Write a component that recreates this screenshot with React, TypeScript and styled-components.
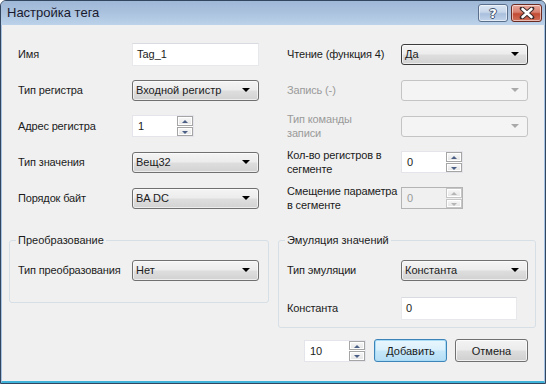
import React from 'react';
import styled, { createGlobalStyle, css } from 'styled-components';

const GlobalStyle = createGlobalStyle`
  html, body {
    margin: 0;
    padding: 0;
    background: #ffffff;
  }
  body {
    font-family: "Liberation Sans", Arial, sans-serif;
    font-size: 11px;
    color: #1b1b1b;
  }
  * {
    box-sizing: border-box;
  }
`;

const Window = styled.div`
  width: 546px;
  height: 384px;
  display: flex;
  flex-direction: column;
  border: 1px solid #33465f;
  border-radius: 6px 6px 0 0;
  overflow: hidden;
  background: #b4cbe5;
`;

const TitleBar = styled.div`
  height: 24px;
  flex: none;
  display: flex;
  align-items: flex-start;
  padding: 0 3px 0 6px;
  background: linear-gradient(#9fb8d6 0%, #a9c1dd 45%, #bcd2ea 100%);
`;

const TitleText = styled.div`
  flex: 1;
  font-size: 13px;
  line-height: 24px;
  color: #1a1a2e;
`;

const CaptionButton = styled.div<{ $close?: boolean }>`
  height: 18px;
  margin-top: 3px;
  display: flex;
  align-items: center;
  justify-content: center;
  border: 1px solid #5a6f8c;
  border-radius: 3px;
  box-shadow: inset 0 0 0 1px rgba(255, 255, 255, 0.55);
  ${(p) =>
    p.$close
      ? css`
          width: 31px;
          margin-left: 3px;
          border-color: #6b2a22;
          background: linear-gradient(#e9a89b 0%, #d7806f 45%, #c34a33 55%, #d0705a 100%);
        `
      : css`
          width: 30px;
          background: linear-gradient(#dbe6f3 0%, #c6d6ea 45%, #a9bfdc 55%, #c2d5ec 100%);
        `}
`;

const HelpMark = styled.span`
  font-family: "DejaVu Sans", sans-serif;
  font-weight: bold;
  font-size: 13px;
  line-height: 13px;
  color: #ffffff;
  text-shadow: -1px 0 #40526d, 1px 0 #40526d, 0 -1px #40526d, 0 1px #40526d;
`;

const Body = styled.div`
  flex: 1;
  display: flex;
  flex-direction: column;
  background: #f0f0f0;
  border-left: 1px solid #a6c3e3;
  border-right: 1px solid #a6c3e3;
  border-bottom: 2px solid #3fb3d9;
  padding: 11px 8px 0 7px;
`;

const FieldGrid = styled.div`
  margin-left: 9px;
  display: grid;
  grid-template-columns: 114px 127px 28px 114px 127px;
  grid-auto-rows: 36px;
  align-items: center;
`;

const Label = styled.div<{ $disabled?: boolean; $col?: number }>`
  grid-column: ${(p) => p.$col ?? 1};
  white-space: nowrap;
  line-height: 14px;
  letter-spacing: -0.15px;
  color: ${(p) => (p.$disabled ? '#9a9a9a' : '#1b1b1b')};
`;

const Cell = styled.div<{ $col: number }>`
  grid-column: ${(p) => p.$col};
  display: flex;
  align-items: center;
`;

const TextInput = styled.div<{ $width?: number }>`
  width: ${(p) => p.$width ?? 127}px;
  height: 23px;
  padding: 0 4px;
  display: flex;
  align-items: center;
  background: #ffffff;
  border: 1px solid #e6e8ec;
  border-top-color: #d8dbe0;
`;

const ComboBox = styled.div<{ $disabled?: boolean; $focused?: boolean }>`
  position: relative;
  width: 127px;
  height: 21px;
  padding: 0 20px 0 3px;
  display: flex;
  align-items: center;
  border: 1px solid ${(p) => (p.$disabled ? '#c4c4c4' : p.$focused ? '#3c3c3c' : '#707070')};
  border-radius: 3px;
  background: ${(p) =>
    p.$disabled
      ? '#f4f4f4'
      : 'linear-gradient(#f4f4f4 0%, #ececec 48%, #dedede 52%, #d2d2d2 100%)'};
  box-shadow: ${(p) => (p.$disabled ? 'none' : 'inset 0 0 0 1px rgba(255,255,255,0.6)')};

  &::after {
    content: '';
    position: absolute;
    right: 8px;
    top: 7px;
    border-left: 4px solid transparent;
    border-right: 4px solid transparent;
    border-top: 4px solid ${(p) => (p.$disabled ? '#a9a9a9' : '#000000')};
  }
`;

const Spin = styled.div<{ $disabled?: boolean }>`
  width: 62px;
  height: 22px;
  display: flex;
  border: 1px solid ${(p) => (p.$disabled ? '#b4b4b4' : '#e3e5ea')};
  background: ${(p) => (p.$disabled ? '#f0f0f0' : '#ffffff')};
`;

const SpinText = styled.div<{ $disabled?: boolean }>`
  flex: 1;
  padding: 0 5px;
  display: flex;
  align-items: center;
  color: ${(p) => (p.$disabled ? '#9a9a9a' : '#1b1b1b')};
`;

const SpinButtons = styled.div`
  width: 16px;
  display: flex;
  flex-direction: column;
  gap: 1px;
`;

const SpinHalf = styled.div<{ $down?: boolean; $disabled?: boolean }>`
  flex: 1;
  position: relative;
  border: 1px solid ${(p) => (p.$disabled ? '#c6c6c6' : '#a5a5a5')};
  background: linear-gradient(#f8f8f8, #e4e4e4);
  box-shadow: inset 0 0 0 1px #ffffff;

  &::after {
    content: '';
    position: absolute;
    left: 4px;
    top: 3px;
    border-left: 3px solid transparent;
    border-right: 3px solid transparent;
    ${(p) =>
      p.$down
        ? css`border-top: 3px solid ${p.$disabled ? '#b5b5b5' : '#4b5f86'};`
        : css`border-bottom: 3px solid ${p.$disabled ? '#b5b5b5' : '#4b5f86'};`}
  }
`;

const GroupRow = styled.div`
  margin-top: 17px;
  display: flex;
  align-items: flex-start;
  gap: 9px;
`;

const Group = styled.fieldset<{ $width: number; $bottom?: number }>`
  width: ${(p) => p.$width}px;
  margin: 0;
  padding: 5px 7px ${(p) => p.$bottom ?? 1}px 8px;
  border: 1px solid #d5dfe5;
  border-radius: 3px;
  min-width: 0;
`;

const GroupTitle = styled.legend`
  padding: 0 2px;
  margin-left: -2px;
  line-height: 14px;
`;

const GroupRowLine = styled.div<{ $gap?: number }>`
  height: 36px;
  margin-top: ${(p) => p.$gap ?? 0}px;
  display: grid;
  grid-template-columns: 114px auto;
  align-items: center;
`;

const Footer = styled.div`
  margin-top: 11px;
  padding-right: 8px;
  display: flex;
  justify-content: flex-end;
  align-items: center;
  gap: 8px;
`;

const Button = styled.div<{ $default?: boolean }>`
  width: 73px;
  height: 23px;
  display: flex;
  align-items: center;
  justify-content: center;
  border-radius: 3px;
  border: 1px solid ${(p) => (p.$default ? '#3d84b8' : '#707070')};
  background: ${(p) =>
    p.$default
      ? 'linear-gradient(#eaf6fd 0%, #d9f0fc 48%, #c6e7f9 52%, #b4ddf4 100%)'
      : 'linear-gradient(#f3f3f3 0%, #ebebeb 48%, #dddddd 52%, #cfcfcf 100%)'};
  box-shadow: ${(p) =>
    p.$default ? 'inset 0 0 0 1px #a7dbf6' : 'inset 0 0 0 1px rgba(255,255,255,0.7)'};
`;

const CloseIcon = () => (
  <svg width="16" height="12" viewBox="0 0 16 12">
    <path
      d="M3 1.5 L13 10.5 M13 1.5 L3 10.5"
      stroke="#3c2a2a"
      strokeWidth="4.5"
      strokeLinecap="round"
      fill="none"
    />
    <path
      d="M3.5 2 L12.5 10 M12.5 2 L3.5 10"
      stroke="#ffffff"
      strokeWidth="2.6"
      strokeLinecap="round"
      fill="none"
    />
  </svg>
);

const SpinBox: React.FC<{ value: string; disabled?: boolean }> = ({ value, disabled }) => (
  <Spin $disabled={disabled}>
    <SpinText $disabled={disabled}>{value}</SpinText>
    <SpinButtons>
      <SpinHalf $disabled={disabled} />
      <SpinHalf $down $disabled={disabled} />
    </SpinButtons>
  </Spin>
);

const App: React.FC = () => {
  return (
    <>
      <GlobalStyle />
      <Window>
        <TitleBar>
          <TitleText>Настройка тега</TitleText>
          <CaptionButton>
            <HelpMark>?</HelpMark>
          </CaptionButton>
          <CaptionButton $close>
            <CloseIcon />
          </CaptionButton>
        </TitleBar>
        <Body>
          <FieldGrid>
            <Label>Имя</Label>
            <Cell $col={2}>
              <TextInput>Tag_1</TextInput>
            </Cell>
            <Label $col={4}>Чтение (функция 4)</Label>
            <Cell $col={5}>
              <ComboBox $focused>Да</ComboBox>
            </Cell>

            <Label>Тип регистра</Label>
            <Cell $col={2}>
              <ComboBox>Входной регистр</ComboBox>
            </Cell>
            <Label $col={4} $disabled>
              Запись (-)
            </Label>
            <Cell $col={5}>
              <ComboBox $disabled />
            </Cell>

            <Label>Адрес регистра</Label>
            <Cell $col={2}>
              <SpinBox value="1" />
            </Cell>
            <Label $col={4} $disabled>
              Тип команды
              <br />
              записи
            </Label>
            <Cell $col={5}>
              <ComboBox $disabled />
            </Cell>

            <Label>Тип значения</Label>
            <Cell $col={2}>
              <ComboBox>Вещ32</ComboBox>
            </Cell>
            <Label $col={4}>
              Кол-во регистров в
              <br />
              сегменте
            </Label>
            <Cell $col={5}>
              <SpinBox value="0" />
            </Cell>

            <Label>Порядок байт</Label>
            <Cell $col={2}>
              <ComboBox>BA DC</ComboBox>
            </Cell>
            <Label $col={4}>
              Смещение параметра
              <br />в сегменте
            </Label>
            <Cell $col={5}>
              <SpinBox value="0" disabled />
            </Cell>
          </FieldGrid>

          <GroupRow>
            <Group $width={260} $bottom={14}>
              <GroupTitle>Преобразование</GroupTitle>
              <GroupRowLine>
                <Label>Тип преобразования</Label>
                <ComboBox>Нет</ComboBox>
              </GroupRowLine>
            </Group>
            <Group $width={258}>
              <GroupTitle>Эмуляция значений</GroupTitle>
              <GroupRowLine>
                <Label>Тип эмуляции</Label>
                <ComboBox>Константа</ComboBox>
              </GroupRowLine>
              <GroupRowLine $gap={2}>
                <Label>Константа</Label>
                <TextInput $width={116}>0</TextInput>
              </GroupRowLine>
            </Group>
          </GroupRow>

          <Footer>
            <SpinBox value="10" />
            <Button $default>Добавить</Button>
            <Button>Отмена</Button>
          </Footer>
        </Body>
      </Window>
    </>
  );
};

export default App;
